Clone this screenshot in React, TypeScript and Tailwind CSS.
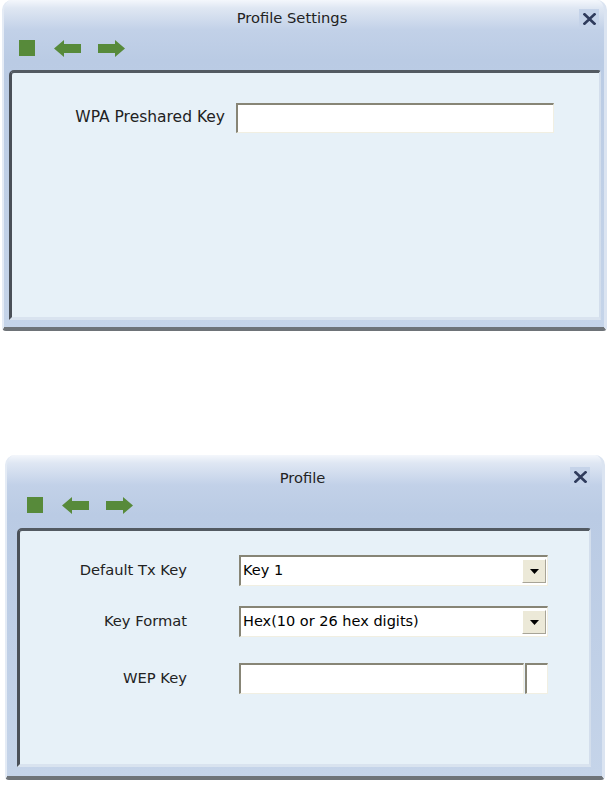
import React from "react";

const font = { fontFamily: '"DejaVu Sans", Verdana, sans-serif' };

function Toolbar({ className }: { className: string }) {
  return (
    <div className={"flex items-start " + className}>
      <svg width="16" height="16" viewBox="0 0 16 16">
        <rect x="0" y="0" width="16" height="16" fill="#578a3a" />
      </svg>
      <svg width="27" height="17" viewBox="0 0 27 17" className="ml-[19px]">
        <path d="M0 8.5 L10 0 L10 4 L27 4 L27 13 L10 13 L10 17 Z" fill="#578a3a" />
      </svg>
      <svg width="27" height="17" viewBox="0 0 27 17" className="ml-[17px]">
        <path d="M27 8.5 L17 0 L17 4 L0 4 L0 13 L17 13 L17 17 Z" fill="#578a3a" />
      </svg>
    </div>
  );
}

function CloseX({ className }: { className: string }) {
  return (
    <div className={"absolute w-[20px] h-[20px] flex items-center justify-center bg-[#c5d3e9] " + className}>
      <svg width="13" height="12" viewBox="0 0 13 12">
        <path d="M1.5 1.3 L11.5 10.7 M11.5 1.3 L1.5 10.7" stroke="#2f3b5c" strokeWidth="2.6" strokeLinecap="square" />
      </svg>
    </div>
  );
}

const windowBase =
  "relative flex flex-col rounded-t-[10px] rounded-b-[4px] bg-[linear-gradient(to_bottom,#f4f7fc_0px,#dfe7f3_8px,#c2d1e8_30px,#bacbe4_60px,#c5d4e9_100%)] border-l-[2px] border-r-[3px] border-b-[4px] border-l-[#e4ebf5] border-r-[#dbe4f1] border-b-[#6e7378] ";

const panelBase =
  "bg-[#e7f1f8] rounded-tl-[5px] rounded-tr-[3px] border-t-[3px] border-l-[3px] border-t-[#535a62] border-l-[#4a5058] border-r-[2px] border-r-[#d3deec] border-b-[3px] border-b-[#d9e3ef] ";

const sunken =
  "bg-white border-t-[2px] border-l-[2px] border-t-[#878576] border-l-[#878576] border-b border-r border-b-[#f1efe2] border-r-[#f1efe2] ";

function TextBox({ className }: { className: string }) {
  return <div className={sunken + className} />;
}

function Select({ value, className }: { value: string; className: string }) {
  return (
    <div className={"flex " + sunken + className}>
      <div className="flex-1 flex items-center pl-[2px] text-[14.5px] text-black">{value}</div>
      <div className="w-[24px] my-[2px] mr-[1px] flex items-center justify-center bg-[#ece9d8] border border-t-white border-l-white border-b-[#a7a497] border-r-[#a7a497]">
        <svg width="9" height="5" viewBox="0 0 9 5">
          <path d="M0 0 L9 0 L4.5 5 Z" fill="#000" />
        </svg>
      </div>
    </div>
  );
}

export default function App() {
  return (
    <div className="w-[609px] h-[786px] bg-white relative flex flex-col" style={font}>
      {/* Window 1 */}
      <div className={windowBase + "ml-[2px] w-[605px] h-[331px]"}>
        <div className="h-[36px] flex items-center justify-center pr-[24px] text-[14.7px] text-[#222]">
          Profile Settings
        </div>
        <CloseX className="right-[5px] top-[9px]" />
        <Toolbar className="h-[34px] pt-[4px] pl-[15px]" />
        <div className={panelBase + "ml-[5px] mr-[3px] h-[250px] flex items-start"}>
          <div className="flex items-center mt-[30px]">
            <div className="w-[224px] text-right text-[15.5px] text-[#222] pr-[11px]">WPA Preshared Key</div>
            <TextBox className="w-[318px] h-[30px]" />
          </div>
        </div>
      </div>

      <div className="h-[124px]" />

      {/* Window 2 */}
      <div className={windowBase + "ml-[5px] w-[600px] h-[325px]"}>
        <div className="h-[40px] pt-[6px] flex items-center justify-center pr-[4px] text-[14.7px] text-[#222]">
          Profile
        </div>
        <CloseX className="right-[12px] top-[12px]" />
        <Toolbar className="h-[33px] pt-[2px] pl-[20px]" />
        <div className={panelBase + "ml-[10px] mr-[11px] h-[239px] flex flex-col"}>
          <div className="flex items-center mt-[24px]">
            <div className="w-[167px] text-right text-[14.7px] text-[#222]">Default Tx Key</div>
            <Select value="Key 1" className="ml-[52px] w-[309px] h-[31px]" />
          </div>
          <div className="flex items-center mt-[20px]">
            <div className="w-[167px] text-right text-[14.7px] text-[#222]">Key Format</div>
            <Select value="Hex(10 or 26 hex digits)" className="ml-[52px] w-[309px] h-[31px]" />
          </div>
          <div className="flex items-center mt-[26px]">
            <div className="w-[167px] text-right text-[14.7px] text-[#222]">WEP Key</div>
            <TextBox className="ml-[52px] w-[285px] h-[31px]" />
            <TextBox className="ml-[1px] w-[23px] h-[31px]" />
          </div>
        </div>
      </div>
    </div>
  );
}
